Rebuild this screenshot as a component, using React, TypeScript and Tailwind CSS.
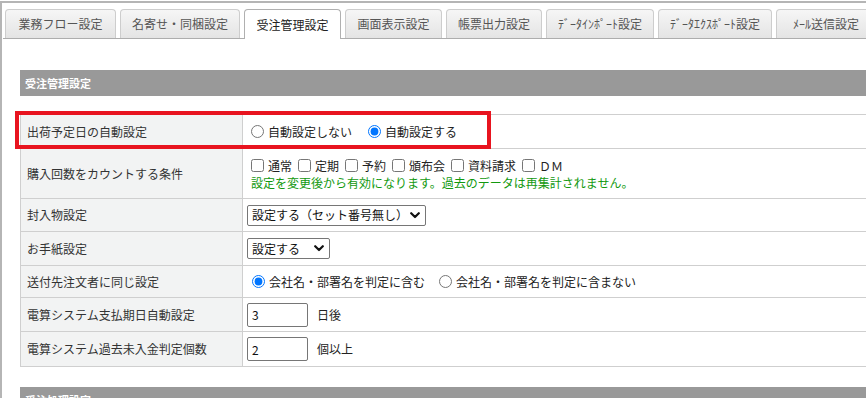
const font = { fontFamily: '"Noto Sans CJK JP", "Noto Sans", sans-serif' };

const tabs = [
  { label: "業務フロー設定", w: "w-[111px]" },
  { label: "名寄せ・同梱設定", w: "w-[120px]" },
  { label: "受注管理設定", w: "w-[97px]", active: true },
  { label: "画面表示設定", w: "w-[97px]" },
  { label: "帳票出力設定", w: "w-[96px]" },
  { label: "ﾃﾞｰﾀｲﾝﾎﾟｰﾄ設定", w: "w-[108px]" },
  { label: "ﾃﾞｰﾀｴｸｽﾎﾟｰﾄ設定", w: "w-[114px]" },
  { label: "ﾒｰﾙ送信設定", w: "w-[100px]" },
];

function Chevron() {
  return (
    <svg width="10" height="7" viewBox="0 0 10 7" className="pointer-events-none absolute right-[6px] top-[7px]">
      <path d="M1.2 1.2 L5 5 L8.8 1.2" fill="none" stroke="#111" strokeWidth="2.2" strokeLinecap="round" strokeLinejoin="round" />
    </svg>
  );
}

function Select({ value, w }: { value: string; w: string }) {
  return (
    <div className={`relative ${w}`}>
      <select
        defaultValue={value}
        className="h-[21px] w-full appearance-none rounded-[2px] border border-[#767676] bg-white pl-[4px] text-[12px] leading-none text-[#111] outline-none"
        style={font}
      >
        <option>{value}</option>
      </select>
      <Chevron />
    </div>
  );
}

function Radio({ checked, label }: { checked?: boolean; label: string }) {
  return (
    <label className="flex items-center">
      <input type="radio" defaultChecked={checked} className="m-0 h-[13px] w-[13px] accent-[#0075ff]" />
      <span className="ml-[4px]">{label}</span>
    </label>
  );
}

function Check({ label }: { label: string }) {
  return (
    <label className="flex items-center">
      <input type="checkbox" className="m-0 h-[13px] w-[13px]" />
      <span className="ml-[4px]">{label}</span>
    </label>
  );
}

function Row({ h, label, children }: { h: string; label: string; children: React.ReactNode }) {
  return (
    <tr className={h}>
      <td className="w-[222px] border border-[#cfcfcf] bg-[#f2f3f3] pl-[6px] text-[12px] text-[#333]">{label}</td>
      <td className="border border-[#cfcfcf] pl-[4px] text-[12px] text-[#222]">{children}</td>
    </tr>
  );
}

export default function App() {
  return (
    <div className="relative h-[398px] w-[866px] overflow-hidden bg-white" style={font}>
      <div className="mt-[1px] h-[397px] border-l-[2px] border-t-[2px] border-[#b5b5b5] pl-[1px]">
        <div className="flex gap-[4px] border-b border-[#adadad] pl-[2px] pt-[6px]">
          {tabs.map((t) =>
            t.active ? (
              <div
                key={t.label}
                className={`${t.w} -mb-px flex h-[30px] shrink-0 items-center justify-center rounded-t-[4px] border border-b-0 border-[#b0b0b0] bg-white text-[12px] text-[#222]`}
              >
                {t.label}
              </div>
            ) : (
              <div
                key={t.label}
                className={`${t.w} flex h-[29px] shrink-0 items-center justify-center rounded-t-[4px] border border-b-0 border-[#cdcdcd] bg-gradient-to-b from-[#f6f6f6] to-[#e4e4e4] text-[12px] text-[#555]`}
              >
                {t.label}
              </div>
            )
          )}
        </div>

        <div className="pl-[17px] pt-[31px]">
          <div className="flex h-[26px] items-center bg-[#999999] pl-[5px] text-[11px] font-bold text-white">受注管理設定</div>

          <table className="mt-[18px] w-[900px] border-collapse">
            <tbody>
              <Row h="h-[34px]" label="出荷予定日の自動設定">
                <div className="flex items-center gap-[16px] pl-[4px]">
                  <Radio label="自動設定しない" />
                  <Radio checked label="自動設定する" />
                </div>
              </Row>
              <Row h="h-[50px]" label="購入回数をカウントする条件">
                <div className="flex items-center gap-[6px] pl-[4px]">
                  <Check label="通常" />
                  <Check label="定期" />
                  <Check label="予約" />
                  <Check label="頒布会" />
                  <Check label="資料請求" />
                  <Check label="ＤＭ" />
                </div>
                <div className="pl-[4px] text-[12px] leading-[16px] text-[#12990f]">
                  設定を変更後から有効になります。過去のデータは再集計されません。
                </div>
              </Row>
              <Row h="h-[33px]" label="封入物設定">
                <Select value="設定する（セット番号無し）" w="w-[179px]" />
              </Row>
              <Row h="h-[34px]" label="お手紙設定">
                <Select value="設定する" w="w-[83px]" />
              </Row>
              <Row h="h-[32px]" label="送付先注文者に同じ設定">
                <div className="flex items-center gap-[14px] pl-[5px]">
                  <Radio checked label="会社名・部署名を判定に含む" />
                  <Radio label="会社名・部署名を判定に含まない" />
                </div>
              </Row>
              <Row h="h-[34px]" label="電算システム支払期日自動設定">
                <div className="flex items-center">
                  <input
                    defaultValue="3"
                    className="h-[24px] w-[61px] rounded-[2px] border border-[#767676] px-[4px] text-[12px] text-[#111] outline-none"
                  />
                  <span className="ml-[9px]">日後</span>
                </div>
              </Row>
              <Row h="h-[35px]" label="電算システム過去未入金判定個数">
                <div className="flex items-center">
                  <input
                    defaultValue="2"
                    className="h-[24px] w-[61px] rounded-[2px] border border-[#767676] px-[4px] text-[12px] text-[#111] outline-none"
                  />
                  <span className="ml-[9px]">個以上</span>
                </div>
              </Row>
            </tbody>
          </table>

          <div className="mt-[20px] flex h-[26px] items-center bg-[#999999] pl-[5px] text-[11px] font-bold text-white">受注処理設定</div>
        </div>
      </div>

      {/* red highlight annotation */}
      <div className="pointer-events-none absolute left-[15px] top-[111px] h-[38px] w-[476px] border-[4px] border-[#e8141f]" />
    </div>
  );
}
